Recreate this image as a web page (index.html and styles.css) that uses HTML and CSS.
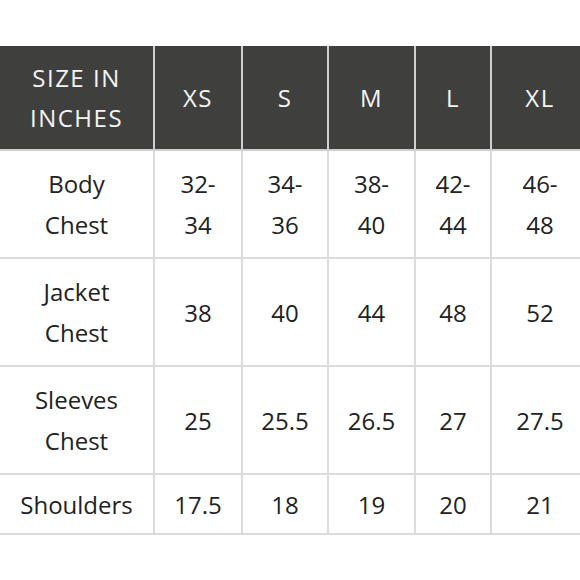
FILE: index.html
```html
<!DOCTYPE html>
<html>
<head>
<meta charset="utf-8">
<link rel="stylesheet" href="styles.css">
</head>
<body>
<div class="wrap">
<table class="size-table">
  <colgroup>
    <col class="c-label"><col class="c-xs"><col class="c-s"><col class="c-m"><col class="c-l"><col class="c-xl">
  </colgroup>
  <thead>
    <tr class="r-head">
      <th>SIZE IN<br>INCHES</th><th>XS</th><th>S</th><th>M</th><th>L</th><th>XL</th>
    </tr>
  </thead>
  <tbody>
    <tr class="r-tall">
      <td>Body<br>Chest</td><td>32-<br>34</td><td>34-<br>36</td><td>38-<br>40</td><td>42-<br>44</td><td>46-<br>48</td>
    </tr>
    <tr class="r-tall">
      <td>Jacket<br>Chest</td><td>38</td><td>40</td><td>44</td><td>48</td><td>52</td>
    </tr>
    <tr class="r-tall">
      <td>Sleeves<br>Chest</td><td>25</td><td>25.5</td><td>26.5</td><td>27</td><td>27.5</td>
    </tr>
    <tr class="r-short">
      <td>Shoulders</td><td>17.5</td><td>18</td><td>19</td><td>20</td><td>21</td>
    </tr>
  </tbody>
</table>
</div>
</body>
</html>
```
FILE: styles.css
```css
html, body {
  margin: 0;
  padding: 0;
  background: #ffffff;
}
.wrap {
  padding-top: 46px;
  margin-left: -2px;
  width: 590px;
  overflow: hidden;
}
.size-table {
  border-collapse: collapse;
  table-layout: fixed;
  width: 590px;
  font-family: "Open Sans", "Liberation Sans", sans-serif;
  font-size: 24px;
  line-height: 41px;
  color: #222222;
}
.c-label { width: 155px; }
.c-xs { width: 88px; }
.c-s { width: 86px; }
.c-m { width: 87px; }
.c-l { width: 76px; }
.c-xl { width: 98px; }
.size-table th,
.size-table td {
  border: 2px solid #dcdcdc;
  text-align: center;
  vertical-align: middle;
  padding: 0;
}
.size-table th {
  background: #3f403d;
  color: #f4f4f4;
  font-weight: 500;
  letter-spacing: 1.5px;
  line-height: 40px;
  border-color: #cfcfcf;
  border-top: none;
}
.r-head { height: 104px; }
.r-tall { height: 108px; }
.r-short { height: 60px; }
```
